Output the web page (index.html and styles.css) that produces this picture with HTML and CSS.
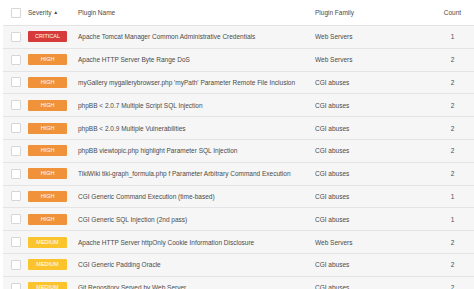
FILE: index.html
```html
<!DOCTYPE html>
<html lang="en">
  <head>
    <meta charset="UTF-8" />
    <title>Plugins</title>
    <link rel="stylesheet" href="styles.css">
  </head>
  <body>
    <table class="plugins">
      <colgroup>
        <col class="col-check" />
        <col class="col-sev" />
        <col class="col-name" />
        <col class="col-family" />
        <col class="col-count" />
      </colgroup>
      <thead>
        <tr>
          <th class="cell-check"><span class="check"></span></th>
          <th>Severity <span class="sort">&#9650;</span></th>
          <th>Plugin Name</th>
          <th>Plugin Family</th>
          <th class="cell-count">Count</th>
        </tr>
      </thead>
      <tbody>
        <tr>
          <td class="cell-check"><span class="check"></span></td>
          <td><span class="badge critical">Critical</span></td>
          <td>Apache Tomcat Manager Common Administrative Credentials</td>
          <td>Web Servers</td>
          <td class="cell-count">1</td>
        </tr>
        <tr>
          <td class="cell-check"><span class="check"></span></td>
          <td><span class="badge high">High</span></td>
          <td>Apache HTTP Server Byte Range DoS</td>
          <td>Web Servers</td>
          <td class="cell-count">2</td>
        </tr>
        <tr>
          <td class="cell-check"><span class="check"></span></td>
          <td><span class="badge high">High</span></td>
          <td>myGallery mygallerybrowser.php 'myPath' Parameter Remote File Inclusion</td>
          <td>CGI abuses</td>
          <td class="cell-count">2</td>
        </tr>
        <tr>
          <td class="cell-check"><span class="check"></span></td>
          <td><span class="badge high">High</span></td>
          <td>phpBB &lt; 2.0.7 Multiple Script SQL Injection</td>
          <td>CGI abuses</td>
          <td class="cell-count">2</td>
        </tr>
        <tr>
          <td class="cell-check"><span class="check"></span></td>
          <td><span class="badge high">High</span></td>
          <td>phpBB &lt; 2.0.9 Multiple Vulnerabilities</td>
          <td>CGI abuses</td>
          <td class="cell-count">2</td>
        </tr>
        <tr>
          <td class="cell-check"><span class="check"></span></td>
          <td><span class="badge high">High</span></td>
          <td>phpBB viewtopic.php highlight Parameter SQL Injection</td>
          <td>CGI abuses</td>
          <td class="cell-count">2</td>
        </tr>
        <tr>
          <td class="cell-check"><span class="check"></span></td>
          <td><span class="badge high">High</span></td>
          <td>TikiWiki tiki-graph_formula.php f Parameter Arbitrary Command Execution</td>
          <td>CGI abuses</td>
          <td class="cell-count">2</td>
        </tr>
        <tr>
          <td class="cell-check"><span class="check"></span></td>
          <td><span class="badge high">High</span></td>
          <td>CGI Generic Command Execution (time-based)</td>
          <td>CGI abuses</td>
          <td class="cell-count">1</td>
        </tr>
        <tr>
          <td class="cell-check"><span class="check"></span></td>
          <td><span class="badge high">High</span></td>
          <td>CGI Generic SQL Injection (2nd pass)</td>
          <td>CGI abuses</td>
          <td class="cell-count">1</td>
        </tr>
        <tr>
          <td class="cell-check"><span class="check"></span></td>
          <td><span class="badge medium">Medium</span></td>
          <td>Apache HTTP Server httpOnly Cookie Information Disclosure</td>
          <td>Web Servers</td>
          <td class="cell-count">2</td>
        </tr>
        <tr>
          <td class="cell-check"><span class="check"></span></td>
          <td><span class="badge medium">Medium</span></td>
          <td>CGI Generic Padding Oracle</td>
          <td>CGI abuses</td>
          <td class="cell-count">2</td>
        </tr>
        <tr>
          <td class="cell-check"><span class="check"></span></td>
          <td><span class="badge medium">Medium</span></td>
          <td>Git Repository Served by Web Server</td>
          <td>CGI abuses</td>
          <td class="cell-count">2</td>
        </tr>
      </tbody>
    </table>
  </body>
</html>
```

FILE: styles.css
```css
:root {
  --text-color: #4a4a4a;
  --row-bg: #f6f6f6;
  --border-color: #e4e4e4;
  --critical: #d63b3b;
  --high: #f0923a;
  --medium: #fcc42c;
}

body {
  margin: 0;
  padding: 0 0 0 3px;
  background: #ffffff;
  font-family: "Liberation Sans", Arial, sans-serif;
  color: var(--text-color);
  overflow: hidden;
}

.plugins {
  width: 471px;
  border-collapse: collapse;
  table-layout: fixed;
  font-size: 6.5px;
}

.col-check {
  width: 25px;
}

.col-sev {
  width: 50px;
}

.col-name {
  width: 237px;
}

.col-family {
  width: 116px;
}

.col-count {
  width: 43px;
}

.plugins th {
  height: 25px;
  text-align: left;
  font-weight: normal;
  background: #ffffff;
  border-bottom: 1px solid var(--border-color);
  padding: 0;
}

.plugins td {
  height: 21.8px;
  padding: 0;
  background: var(--row-bg);
  border-bottom: 1px solid var(--border-color);
  white-space: nowrap;
  overflow: hidden;
}

.plugins .cell-check {
  padding-left: 8px;
}

.plugins .cell-count {
  text-align: center;
}

.check {
  display: block;
  width: 8px;
  height: 8px;
  border: 1px solid #d6d6d6;
  border-radius: 1px;
  background: #ffffff;
}

.sort {
  font-size: 5px;
  vertical-align: 1px;
}

.badge {
  display: block;
  width: 39px;
  height: 11px;
  line-height: 11px;
  border-radius: 1px;
  text-align: center;
  text-transform: uppercase;
  font-size: 5.5px;
  color: #ffffff;
}

.badge.critical {
  background: var(--critical);
}

.badge.high {
  background: var(--high);
}

.badge.medium {
  background: var(--medium);
}
```
